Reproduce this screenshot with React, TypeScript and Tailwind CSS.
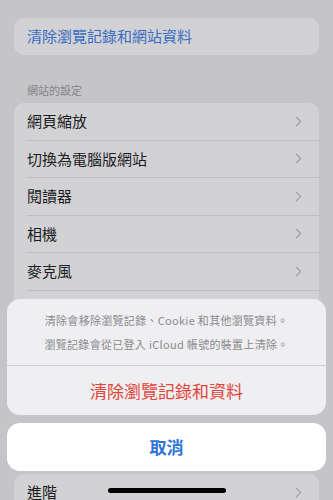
import { ChevronRight } from "lucide-react";

const rows = ["網頁縮放", "切換為電腦版網站", "閱讀器", "相機", "麥克風", "位置"];

const Row = ({ label, last }: { label: string; last?: boolean }) => (
  <div className="flex h-[37.5px] items-center pl-[13px]">
    <div
      className={`flex h-full flex-1 items-center justify-between pr-[12px] ${
        last ? "" : "border-b border-[#bdbdc1]"
      }`}
    >
      <span className="text-[15px] text-[#1c1c1e]">{label}</span>
      <ChevronRight size={17} strokeWidth={1.75} className="text-[#a2a2a7]" />
    </div>
  </div>
);

export default function App() {
  return (
    <div
      className="relative h-[500px] w-[333px] overflow-hidden bg-[#c5c5c9]"
      style={{ fontFamily: '"Noto Sans CJK TC", "Noto Sans", sans-serif' }}
    >
      {/* settings behind the sheet */}
      <div className="px-[14px] pt-[18px]">
        <div className="flex h-[37px] items-center rounded-[10px] bg-[#d2d2d5] px-[13px]">
          <span className="text-[15px] text-[#3a6cc4]">清除瀏覽記錄和網站資料</span>
        </div>

        <div className="flex h-[48px] items-end pb-[5px] pl-[13px]">
          <span className="text-[11px] text-[#838388]">網站的設定</span>
        </div>
        <div className="rounded-[10px] bg-[#d2d2d5]">
          {rows.map((r, i) => (
            <Row key={r} label={r} last={i === rows.length - 1} />
          ))}
        </div>

        <div className="flex h-[48px] items-end pb-[5px] pl-[13px]">
          <span className="text-[11px] text-[#838388]">閱讀列表</span>
        </div>
        <div className="rounded-[10px] bg-[#d2d2d5]">
          <Row label="自動離線儲存" last />
        </div>

        <div className="mt-[60px] rounded-[10px] bg-[#d2d2d5]">
          <Row label="進階" last />
        </div>
      </div>

      {/* action sheet */}
      <div className="absolute inset-x-0 bottom-0 px-[7px] pb-[29px]">
        <div className="overflow-hidden rounded-[13px] bg-[#efeff1]">
          <div className="flex h-[67px] flex-col items-center justify-center gap-[13px] border-b border-[#cfcfd2] text-[11px] tracking-[0.3px] text-[#8a8a8f]">
            <span className="leading-none">清除會移除瀏覽記錄、Cookie 和其他瀏覽資料。</span>
            <span className="leading-none">瀏覽記錄會從已登入 iCloud 帳號的裝置上清除。</span>
          </div>
          <div className="flex h-[49px] items-center justify-center">
            <span className="text-[17px] text-[#e0443a]">清除瀏覽記錄和資料</span>
          </div>
        </div>
        <div className="mt-[8px] flex h-[48px] items-center justify-center rounded-[13px] bg-white">
          <span className="text-[17px] font-semibold text-[#2f74d6]">取消</span>
        </div>
      </div>

      {/* home indicator */}
      <div className="absolute bottom-[7px] left-1/2 h-[5px] w-[118px] -translate-x-1/2 rounded-full bg-black" />
    </div>
  );
}
